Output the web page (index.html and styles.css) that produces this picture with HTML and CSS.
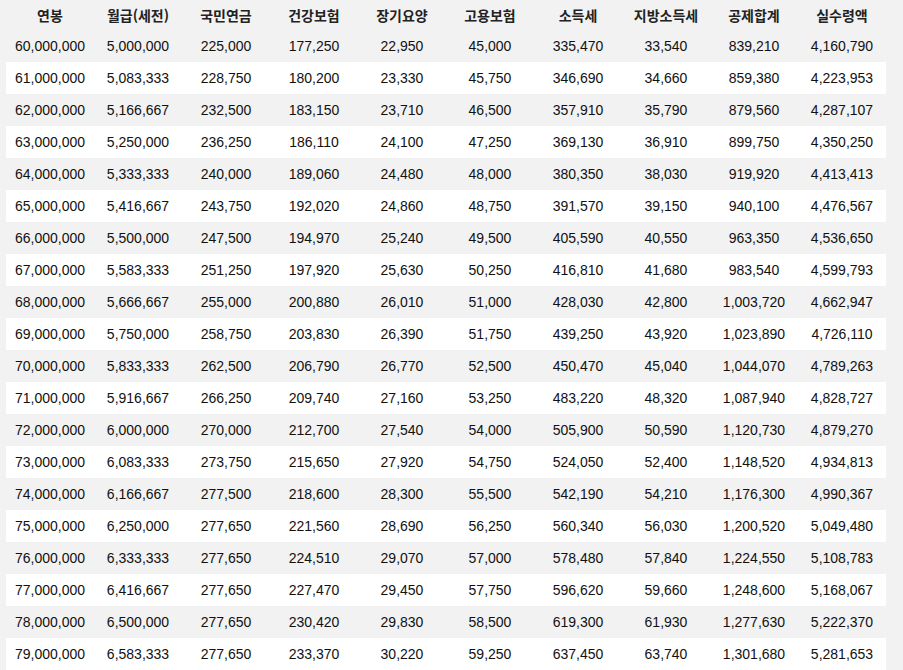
FILE: index.html
```html
<!DOCTYPE html>
<html lang="ko">
<head>
<meta charset="utf-8">
<link rel="stylesheet" href="styles.css">
</head>
<body>
<table class="salary">
<thead>
<tr><th>연봉</th><th>월급(세전)</th><th>국민연금</th><th>건강보험</th><th>장기요양</th><th>고용보험</th><th>소득세</th><th>지방소득세</th><th>공제합계</th><th>실수령액</th></tr>
</thead>
<tbody>
<tr><td>60,000,000</td><td>5,000,000</td><td>225,000</td><td>177,250</td><td>22,950</td><td>45,000</td><td>335,470</td><td>33,540</td><td>839,210</td><td>4,160,790</td></tr>
<tr><td>61,000,000</td><td>5,083,333</td><td>228,750</td><td>180,200</td><td>23,330</td><td>45,750</td><td>346,690</td><td>34,660</td><td>859,380</td><td>4,223,953</td></tr>
<tr><td>62,000,000</td><td>5,166,667</td><td>232,500</td><td>183,150</td><td>23,710</td><td>46,500</td><td>357,910</td><td>35,790</td><td>879,560</td><td>4,287,107</td></tr>
<tr><td>63,000,000</td><td>5,250,000</td><td>236,250</td><td>186,110</td><td>24,100</td><td>47,250</td><td>369,130</td><td>36,910</td><td>899,750</td><td>4,350,250</td></tr>
<tr><td>64,000,000</td><td>5,333,333</td><td>240,000</td><td>189,060</td><td>24,480</td><td>48,000</td><td>380,350</td><td>38,030</td><td>919,920</td><td>4,413,413</td></tr>
<tr><td>65,000,000</td><td>5,416,667</td><td>243,750</td><td>192,020</td><td>24,860</td><td>48,750</td><td>391,570</td><td>39,150</td><td>940,100</td><td>4,476,567</td></tr>
<tr><td>66,000,000</td><td>5,500,000</td><td>247,500</td><td>194,970</td><td>25,240</td><td>49,500</td><td>405,590</td><td>40,550</td><td>963,350</td><td>4,536,650</td></tr>
<tr><td>67,000,000</td><td>5,583,333</td><td>251,250</td><td>197,920</td><td>25,630</td><td>50,250</td><td>416,810</td><td>41,680</td><td>983,540</td><td>4,599,793</td></tr>
<tr><td>68,000,000</td><td>5,666,667</td><td>255,000</td><td>200,880</td><td>26,010</td><td>51,000</td><td>428,030</td><td>42,800</td><td>1,003,720</td><td>4,662,947</td></tr>
<tr><td>69,000,000</td><td>5,750,000</td><td>258,750</td><td>203,830</td><td>26,390</td><td>51,750</td><td>439,250</td><td>43,920</td><td>1,023,890</td><td>4,726,110</td></tr>
<tr><td>70,000,000</td><td>5,833,333</td><td>262,500</td><td>206,790</td><td>26,770</td><td>52,500</td><td>450,470</td><td>45,040</td><td>1,044,070</td><td>4,789,263</td></tr>
<tr><td>71,000,000</td><td>5,916,667</td><td>266,250</td><td>209,740</td><td>27,160</td><td>53,250</td><td>483,220</td><td>48,320</td><td>1,087,940</td><td>4,828,727</td></tr>
<tr><td>72,000,000</td><td>6,000,000</td><td>270,000</td><td>212,700</td><td>27,540</td><td>54,000</td><td>505,900</td><td>50,590</td><td>1,120,730</td><td>4,879,270</td></tr>
<tr><td>73,000,000</td><td>6,083,333</td><td>273,750</td><td>215,650</td><td>27,920</td><td>54,750</td><td>524,050</td><td>52,400</td><td>1,148,520</td><td>4,934,813</td></tr>
<tr><td>74,000,000</td><td>6,166,667</td><td>277,500</td><td>218,600</td><td>28,300</td><td>55,500</td><td>542,190</td><td>54,210</td><td>1,176,300</td><td>4,990,367</td></tr>
<tr><td>75,000,000</td><td>6,250,000</td><td>277,650</td><td>221,560</td><td>28,690</td><td>56,250</td><td>560,340</td><td>56,030</td><td>1,200,520</td><td>5,049,480</td></tr>
<tr><td>76,000,000</td><td>6,333,333</td><td>277,650</td><td>224,510</td><td>29,070</td><td>57,000</td><td>578,480</td><td>57,840</td><td>1,224,550</td><td>5,108,783</td></tr>
<tr><td>77,000,000</td><td>6,416,667</td><td>277,650</td><td>227,470</td><td>29,450</td><td>57,750</td><td>596,620</td><td>59,660</td><td>1,248,600</td><td>5,168,067</td></tr>
<tr><td>78,000,000</td><td>6,500,000</td><td>277,650</td><td>230,420</td><td>29,830</td><td>58,500</td><td>619,300</td><td>61,930</td><td>1,277,630</td><td>5,222,370</td></tr>
<tr><td>79,000,000</td><td>6,583,333</td><td>277,650</td><td>233,370</td><td>30,220</td><td>59,250</td><td>637,450</td><td>63,740</td><td>1,301,680</td><td>5,281,653</td></tr>
</tbody>
</table>
</body>
</html>
```
FILE: styles.css
```css
html, body {
  margin: 0;
  padding: 0;
  background: #f2f2f2;
}
body {
  padding: 0 17px 0 6px;
  font-family: "Liberation Sans", Arial, "Noto Sans CJK KR", sans-serif;
  font-size: 14px;
  color: #111;
}
.salary {
  width: 880px;
  border-collapse: collapse;
  table-layout: fixed;
}
.salary th,
.salary td {
  width: 88px;
  padding: 0;
  text-align: center;
  white-space: nowrap;
}
.salary th {
  height: 30px;
  font-family: "Noto Sans CJK KR", sans-serif;
  font-weight: 700;
  font-size: 14px;
  color: #222;
  line-height: 30px;
}
.salary td {
  height: 32px;
  line-height: 32px;
}
.salary tbody tr:nth-child(even) {
  background: #ffffff;
}
```
